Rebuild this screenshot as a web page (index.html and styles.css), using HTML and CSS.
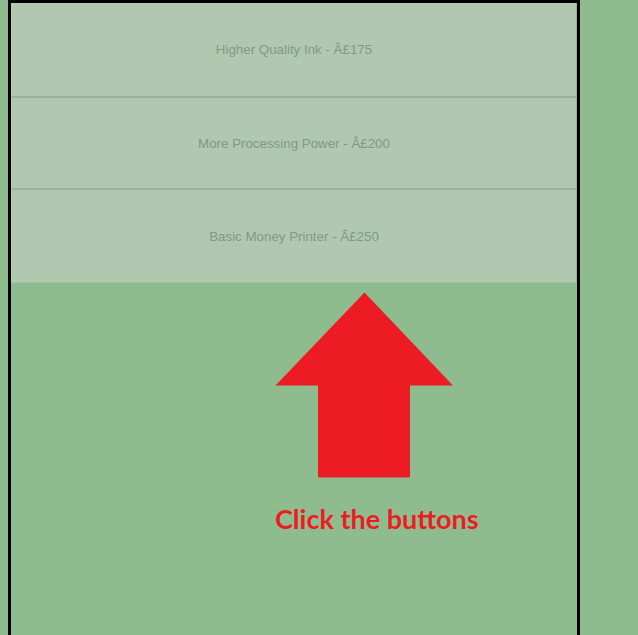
FILE: index.html
```html
<!DOCTYPE html>
<html>
<head>
<meta charset="utf-8">
<link rel="stylesheet" href="styles.css">
</head>
<body>
<div class="panel">
  <div class="shop">
    <button class="item item-first" disabled>Higher Quality Ink - Â£175</button>
    <button class="item item-mid" disabled>More Processing Power - Â£200</button>
    <button class="item item-last" disabled>Basic Money Printer - Â£250</button>
  </div>
  <div class="hint">
    <svg class="arrow" width="179" height="186" viewBox="0 0 179 186">
      <path d="M89.5 0.5 L178 93.5 L135 93.5 L135 184.5 Q135 185.5 134 185.5 L44 185.5 Q43 185.5 43 184.5 L43 93.5 L0.5 93.5 Z" fill="#ed1c24"/>
    </svg>
    <div class="hint-text">Click the buttons</div>
  </div>
</div>
</body>
</html>
```
FILE: styles.css
```css
html {
  overflow: hidden;
}
body {
  margin: 0 0 0 8px;
  background: #8fbc8f;
  font-family: "Liberation Sans", Arial, sans-serif;
}
.panel {
  width: 566px;
  height: 632px;
  border: 3px solid #000;
  border-bottom: none;
  display: flex;
  flex-direction: column;
}
.shop {
  display: flex;
  flex-direction: column;
}
.item {
  margin: 0;
  padding: 0;
  background: #b0c8b0;
  border: none;
  border-left: 1px solid #b9cdb9;
  border-right: 1px solid #9ab39a;
  border-bottom: 2px solid #9ab29a;
  color: #819a81;
  font-family: "Liberation Sans", Arial, sans-serif;
  font-size: 13.333px;
  text-align: center;
}
.item-first {
  height: 95px;
}
.item-mid {
  height: 92px;
}
.item-last {
  height: 93px;
  border-bottom: 1px solid #a6c0a6;
}
.hint {
  display: flex;
  flex-direction: column;
  align-items: flex-start;
  padding-left: 264px;
  padding-top: 9px;
}
.arrow {
  display: block;
}
.hint-text {
  margin-top: 25px;
  color: #ed1c24;
  font-family: Lato, "Open Sans", sans-serif;
  font-weight: bold;
  font-size: 27px;
  line-height: 31px;
}
```
